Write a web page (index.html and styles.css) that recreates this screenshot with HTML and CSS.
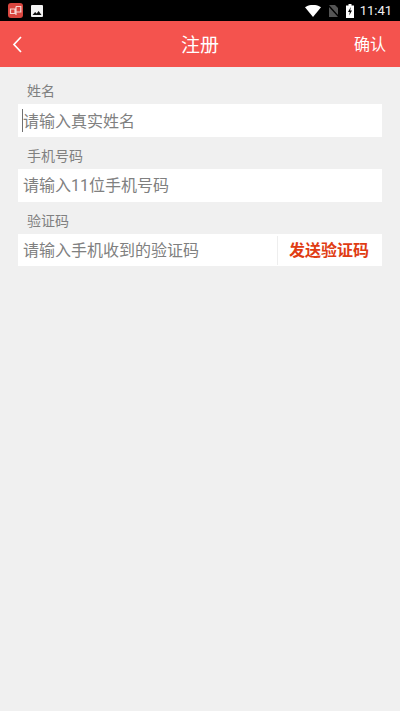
FILE: index.html
```html
<!DOCTYPE html>
<html lang="zh-CN">
<head>
<meta charset="utf-8">
<title>注册</title>
<link rel="stylesheet" href="styles.css">
</head>
<body>
<div class="status">
  <div class="status-left">
    <svg class="app-icon" width="15" height="15" viewBox="0 0 15 15"><rect width="15" height="15" rx="3" fill="#d9463f"/><path d="M2.500 6h4.500v4.500H2.500zM8 3.500h4.800v5.500H8M8 3.500v8.500" fill="none" stroke="#f8d5d2" stroke-width="1.200"/></svg>
    <svg class="img-icon" width="12" height="12" viewBox="0 0 12 12"><rect width="12" height="12" rx="1" fill="#f2f2f2"/><path d="M1.500 10l2.600-3 1.600 1.600L7.600 6l2.900 4z" fill="#111"/></svg>
  </div>
  <div class="status-right">
    <svg class="wifi" width="16" height="12" viewBox="0 0 16 12"><path d="M0 2.200C4.500-.9 11.500-.9 16 2.200L8 12z" fill="#fff"/></svg>
    <svg class="nosim" width="11" height="14" viewBox="0 0 11 14"><path d="M1 1h6l3 3v9H1z" fill="#555"/><path d="M0 1l11 12" stroke="#000" stroke-width="1.500"/></svg>
    <svg class="battery" width="8" height="14" viewBox="0 0 8 14"><path d="M2.500 0h3v1.500H8V14H0V1.500h2.500z" fill="#fff"/><path d="M4.800 3L2 8h1.800L3.200 11.500 6 6.500H4.200z" fill="#000"/></svg>
    <span class="time">11:41</span>
  </div>
</div>
<header class="bar">
  <svg class="back" width="10" height="17" viewBox="0 0 10 17"><path d="M9 1L2 8.500L9 16" fill="none" stroke="#fff" stroke-width="1.700"/></svg>
  <h1 class="title">注册</h1>
  <span class="confirm">确认</span>
</header>
<main class="form">
  <label class="label">姓名</label>
  <div class="field"><span class="caret"></span><span class="hint">请输入真实姓名</span></div>
  <label class="label">手机号码</label>
  <div class="field"><span class="hint">请输入11位手机号码</span></div>
  <label class="label">验证码</label>
  <div class="field">
    <span class="hint grow">请输入手机收到的验证码</span>
    <span class="send">发送验证码</span>
  </div>
</main>
</body>
</html>
```
FILE: styles.css
```css
* { box-sizing: border-box; }
html, body { margin: 0; padding: 0; }
body {
  width: 400px;
  height: 711px;
  overflow: hidden;
  background: #f0f0f0;
  font-family: "Roboto", "Noto Sans CJK SC", sans-serif;
}
.status {
  height: 21px;
  background: #000;
  display: flex;
  justify-content: space-between;
  align-items: center;
  padding: 0 8px 0 8px;
}
.status-left, .status-right { display: flex; align-items: center; }
.app-icon { margin-right: 8px; }
.wifi { margin-right: 7px; }
.nosim { margin-right: 7px; }
.battery { margin-right: 6px; }
.time { color: #f0f0f0; font-size: 13px; }
.bar {
  height: 46px;
  background: #f4534e;
  display: grid;
  grid-template-columns: 1fr auto 1fr;
  align-items: center;
  padding: 0 14px 2px;
  color: #fff;
}
.back { justify-self: start; margin: 2px 0 0 -2px; }
.title { margin: 0; font-size: 19px; font-weight: 400; }
.confirm { justify-self: end; font-size: 16px; }
.form { padding: 14.400px 18px 0; }
.label {
  display: block;
  height: 23px;
  padding-left: 9px;
  font-size: 14px;
  line-height: 20px;
  color: #808080;
}
.field {
  position: relative;
  height: 32.500px;
  background: #fff;
  display: flex;
  align-items: center;
  padding: 0 0 2px 5px;
  margin-bottom: 9.250px;
}
.hint { font-size: 16px; color: #808080; }
.grow { flex: 1; }
.caret {
  position: absolute;
  left: 4px;
  top: 5px;
  width: 1px;
  height: 23px;
  background: #707070;
}
.send {
  width: 105px;
  height: 29px;
  margin-bottom: -2px;
  padding: 0 2px 2px 0;
  border-left: 1px solid #eeeeee;
  display: flex;
  align-items: center;
  justify-content: center;
  font-size: 16px;
  font-weight: 700;
  color: #e03c13;
}
```
